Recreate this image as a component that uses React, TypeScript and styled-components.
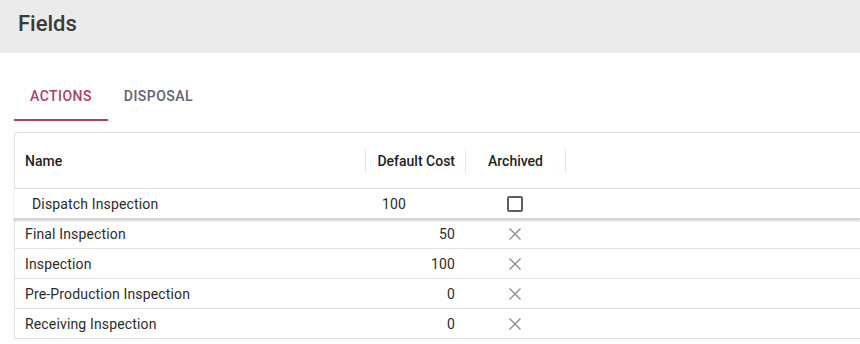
import React from 'react'
import styled, { createGlobalStyle } from 'styled-components'

const GlobalStyle = createGlobalStyle`
  body {
    margin: 0;
    background: #fff;
    font-family: Roboto, "Liberation Sans", sans-serif;
    overflow: hidden;
  }
`

type Row = { name: string; cost: number }

const rows: Row[] = [
  { name: 'Final Inspection', cost: 50 },
  { name: 'Inspection', cost: 100 },
  { name: 'Pre-Production Inspection', cost: 0 },
  { name: 'Receiving Inspection', cost: 0 },
]

const CloseIcon = () => (
  <svg width="14" height="14" viewBox="0 0 14 14">
    <path d="M1.5 1.5 L12.5 12.5 M12.5 1.5 L1.5 12.5" stroke="#8a8a8a" strokeWidth="1.3" fill="none" />
  </svg>
)

const App = () => {
  return (
    <Page>
      <GlobalStyle />
      <TitleBar>
        <Title>Fields</Title>
      </TitleBar>
      <Content>
        <Tabs>
          <Tab $active>Actions</Tab>
          <Tab>Disposal</Tab>
        </Tabs>
        <Grid>
          <HeaderRow>
            <HeadCell $width={350}>Name</HeadCell>
            <Sep />
            <HeadCell $width={99} $align="right">Default Cost</HeadCell>
            <Sep />
            <HeadCell $width={99} $align="center">Archived</HeadCell>
            <Sep />
          </HeaderRow>
          <EditRow>
            <EditCell $width={351}>Dispatch Inspection</EditCell>
            <EditCell $width={100} $pad={17}>100</EditCell>
            <EditCell $width={100} $align="center">
              <Checkbox />
            </EditCell>
          </EditRow>
          {rows.map((r) => (
            <BodyRow key={r.name}>
              <Cell $width={350}>{r.name}</Cell>
              <Cell $width={100} $align="right">{r.cost}</Cell>
              <Cell $width={100} $align="center">
                <CloseIcon />
              </Cell>
            </BodyRow>
          ))}
        </Grid>
      </Content>
    </Page>
  )
}

const Page = styled.div`
  width: 860px;
  height: 344px;
  overflow: hidden;
`

const TitleBar = styled.div`
  height: 53px;
  background: #ebebeb;
  display: flex;
  align-items: center;
  padding: 0 18px;
  box-sizing: border-box;
`

const Title = styled.h1`
  margin: 0 0 6px;
  font-size: 22px;
  font-weight: 500;
  color: #3a3a3a;
`

const Content = styled.div`
  padding: 20px 0 0 14px;
`

const Tabs = styled.div`
  display: flex;
  height: 48px;
  margin-bottom: 11px;
`

const Tab = styled.div<{ $active?: boolean }>`
  display: flex;
  align-items: center;
  justify-content: center;
  padding: 0 16px;
  font-size: 14px;
  font-weight: 500;
  letter-spacing: 0.45px;
  text-transform: uppercase;
  color: ${(p) => (p.$active ? '#a8426b' : '#5e6473')};
  border-bottom: 2px solid ${(p) => (p.$active ? '#a8426b' : 'transparent')};
  box-sizing: border-box;
`

const Grid = styled.div`
  border: 1px solid #e0e0e0;
  border-right: none;
  border-bottom: none;
  border-top-left-radius: 4px;
  font-size: 14px;
  letter-spacing: 0.15px;
  color: #222;
`

const HeaderRow = styled.div`
  display: flex;
  align-items: center;
  height: 55px;
  border-bottom: 1px solid #e0e0e0;
`

const HeadCell = styled.div<{ $width: number; $align?: string }>`
  width: ${(p) => p.$width}px;
  box-sizing: border-box;
  padding: 0 10px;
  font-weight: 500;
  letter-spacing: 0;
  white-space: nowrap;
  color: #1f1f1f;
  text-align: ${(p) => p.$align || 'left'};
`

const Sep = styled.div`
  width: 1px;
  height: 24px;
  background: #e4e4e4;
`

const EditRow = styled.div`
  display: flex;
  align-items: center;
  height: 30px;
  margin-left: -1px;
  background: #fff;
  position: relative;
  box-shadow: 0 2px 2px rgba(0, 0, 0, 0.18);
  border-bottom: 1px solid #d5d5d5;
  box-sizing: border-box;
`

const EditCell = styled.div<{ $width: number; $align?: string; $pad?: number }>`
  width: ${(p) => p.$width}px;
  box-sizing: border-box;
  padding: 0 ${(p) => p.$pad ?? 18}px;
  display: flex;
  justify-content: ${(p) => (p.$align === 'center' ? 'center' : 'flex-start')};
  color: #2a2a2a;
`

const Checkbox = styled.span`
  width: 12px;
  height: 12px;
  border: 2px solid #5f5f5f;
  border-radius: 2px;
`

const BodyRow = styled.div`
  display: flex;
  align-items: center;
  height: 30px;
  border-bottom: 1px solid #e0e0e0;
  box-sizing: border-box;
`

const Cell = styled.div<{ $width: number; $align?: string }>`
  width: ${(p) => p.$width}px;
  box-sizing: border-box;
  padding: 0 10px;
  display: flex;
  justify-content: ${(p) =>
    p.$align === 'right' ? 'flex-end' : p.$align === 'center' ? 'center' : 'flex-start'};
  color: #2b2b2b;
`

export default App
